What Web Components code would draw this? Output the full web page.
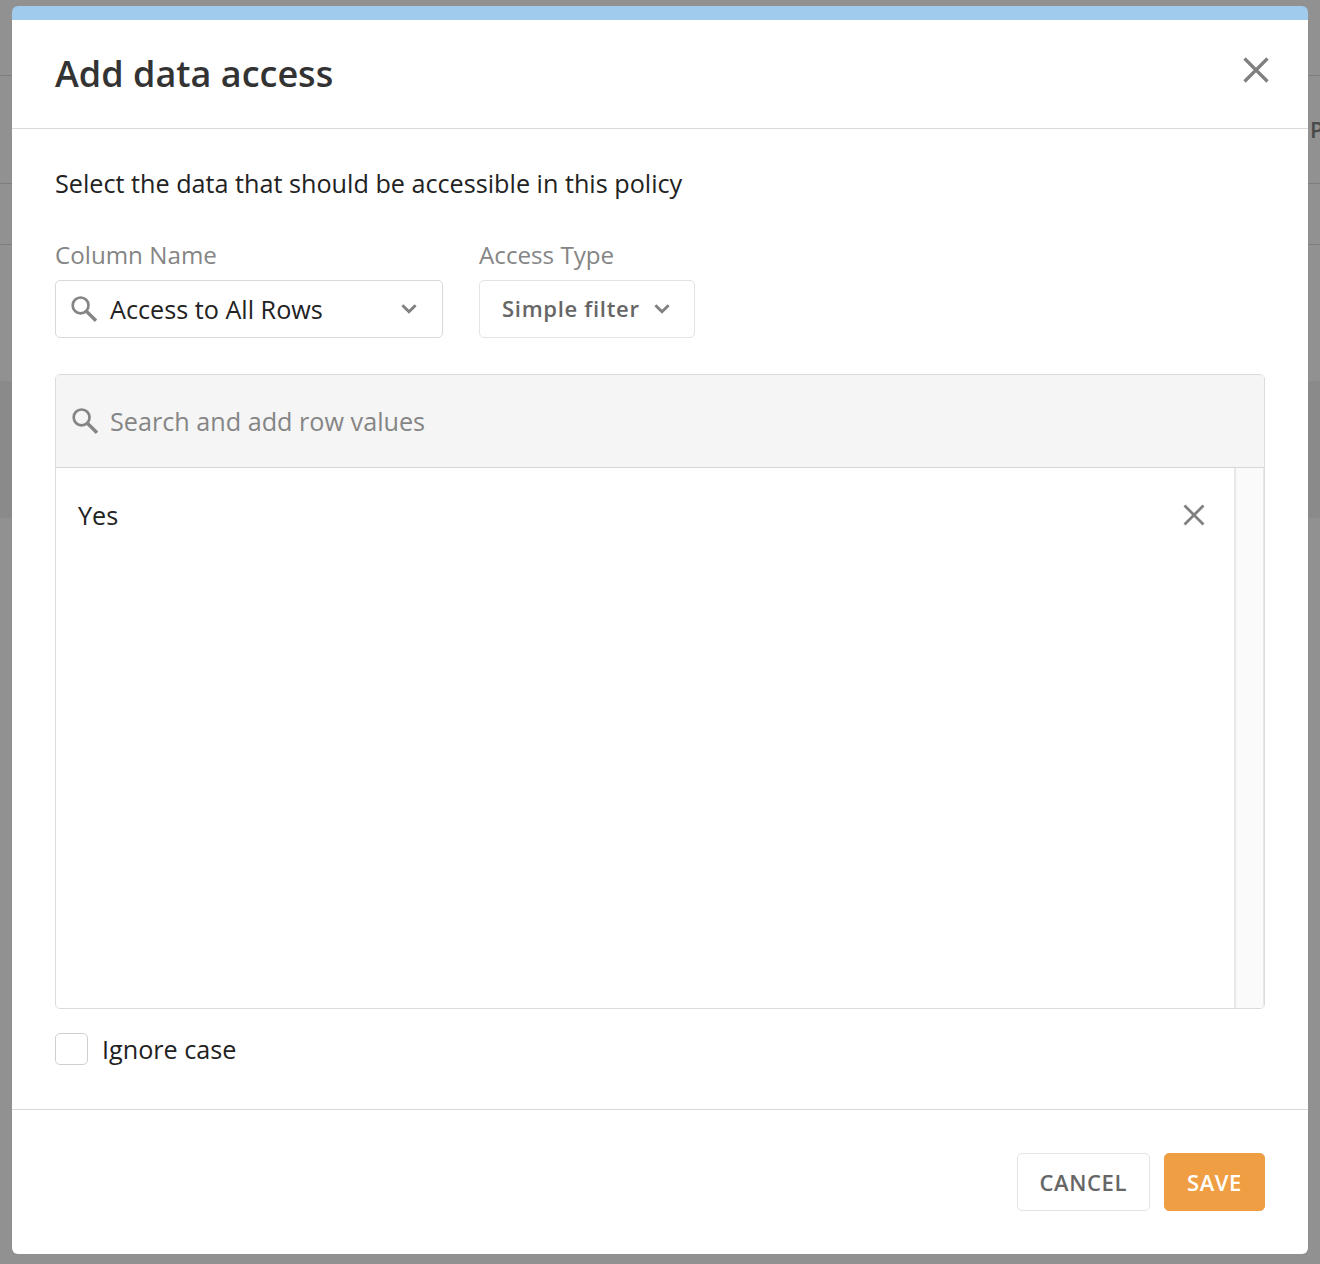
<!DOCTYPE html>
<html>
<head>
<meta charset="utf-8">
<title>Add data access</title>
<style>
  html, body { margin: 0; height: 100%; overflow: hidden; background: #919191; }
  body { font-family: "Open Sans", "Liberation Sans", sans-serif; }
</style>
</head>
<body>
<back-page></back-page>
<data-modal heading="Add data access">
  <p class="lead" slot="lead">Select the data that should be accessible in this policy</p>
  <field-select slot="fields" label="Column Name" value="Access to All Rows" search></field-select>
  <field-select slot="fields" label="Access Type" value="Simple filter"></field-select>
  <value-panel slot="panel" placeholder="Search and add row values">
    <value-row>Yes</value-row>
  </value-panel>
  <check-box slot="check">Ignore case</check-box>
  <flat-button slot="actions">CANCEL</flat-button>
  <flat-button slot="actions" primary>SAVE</flat-button>
</data-modal>

<script>
const SEARCH_ICON = `<svg width="28" height="28" viewBox="0 0 28 28" fill="none" stroke="#858585"><circle cx="9.6" cy="10.4" r="7.9" stroke-width="2.7"/><path d="M15.4 16.2L25 25.8" stroke-width="3.4"/></svg>`;
const CHEVRON_ICON = `<svg width="16" height="10" viewBox="0 0 16 10" fill="none" stroke="#808080" stroke-width="2.8"><path d="M1.4 1.2L8 7.8L14.6 1.2"/></svg>`;

// gris derriere le modal
class BackPage extends HTMLElement {
  constructor() {
    super();
    this.attachShadow({ mode: "open" });
    this.shadowRoot.innerHTML = `
      <style>
        :host { display: block; height: 1264px; background: #919191; color: #4a4a4a; overflow: hidden; }
        .r { border-bottom: 1px solid #7d7d7d; box-sizing: border-box; }
        .r1 { height: 76px; }
        .r2 { height: 108px; padding-bottom: 2px; display: flex; justify-content: flex-end; align-items: center; font-size: 22px; font-weight: 600; }
        .r2 span { width: 10px; overflow: hidden; }
        .r3 { height: 61px; }
        .gap { height: 136px; }
        .band { height: 137px; background: #8a8a8a; }
      </style>
      <div class="r r1"></div>
      <div class="r r2"><span>P</span></div>
      <div class="r r3"></div>
      <div class="gap"></div>
      <div class="band"></div>`;
  }
}

class DataModal extends HTMLElement {
  constructor() {
    super();
    this.attachShadow({ mode: "open" });
    this.shadowRoot.innerHTML = `
      <style>
        :host {
          position: absolute; left: 12px; top: 6px; width: 1296px; height: 1248px;
          display: flex; flex-direction: column; box-sizing: border-box;
          background: #fff; border-radius: 6px; overflow: hidden;
          border-top: 14px solid #a0cbec;
        }
        header {
          height: 108px; box-sizing: content-box; border-bottom: 1px solid #d9d9d9;
          display: flex; align-items: flex-start; justify-content: space-between;
          padding: 0 39px 0 43px;
        }
        h1 { margin: 30px 0 0; font-size: 36px; line-height: 48px; font-weight: 600; color: #333; }
        .close { margin-top: 37px; width: 26px; height: 26px; }
        main { flex: 1; padding: 0 43px; display: flex; flex-direction: column; min-height: 0; }
        ::slotted(.lead) { margin: 36px 0 0; font-size: 25.2px; line-height: 36px; color: #222; }
        .fields { display: flex; gap: 36px; margin-top: 38px; }
        .panel { margin-top: 36px; }
        .check { margin-top: 23px; }
        footer {
          height: 145px; box-sizing: border-box; border-top: 1px solid #d9d9d9;
          display: flex; justify-content: flex-end; align-items: flex-start; gap: 14px;
          padding: 43px 43px 0 0;
        }
      </style>
      <header>
        <h1></h1>
        <svg class="close" viewBox="0 0 26 26" fill="none" stroke="#7f7f7f" stroke-width="3.2"><path d="M1.5 1.5L24.5 24.5M24.5 1.5L1.5 24.5"/></svg>
      </header>
      <main>
        <slot name="lead"></slot>
        <div class="fields"><slot name="fields"></slot></div>
        <div class="panel"><slot name="panel"></slot></div>
        <div class="check"><slot name="check"></slot></div>
      </main>
      <footer><slot name="actions"></slot></footer>`;
    this.shadowRoot.querySelector("h1").textContent = this.getAttribute("heading");
  }
}

class FieldSelect extends HTMLElement {
  constructor() {
    super();
    this.attachShadow({ mode: "open" });
    const search = this.hasAttribute("search");
    this.shadowRoot.innerHTML = `
      <style>
        :host { display: block; }
        label { display: block; font-size: 24.2px; line-height: 31px; font-weight: 500; color: #858585; margin-bottom: 10px; }
        .box {
          height: 58px; box-sizing: border-box; border: 1px solid #d9d9d9; border-radius: 5px;
          display: flex; align-items: center; background: #fff;
        }
        .search { width: 388px; padding: 0 25px 0 15px; }
        .plain { width: 216px; padding: 0 24px 0 22px; border-color: #e3e3e3; }
        .search svg:first-child { margin-right: 11px; flex: none; }
        .value { flex: 1; font-size: 25.2px; color: #222; white-space: nowrap; }
        .plain .value { font-size: 22px; font-weight: 600; color: #666; letter-spacing: 0.7px; padding-bottom: 2px; }
      </style>
      <label></label>
      <div class="box ${search ? "search" : "plain"}">
        ${search ? SEARCH_ICON : ""}
        <span class="value"></span>
        ${CHEVRON_ICON}
      </div>`;
    this.shadowRoot.querySelector("label").textContent = this.getAttribute("label");
    this.shadowRoot.querySelector(".value").textContent = this.getAttribute("value");
  }
}

class ValuePanel extends HTMLElement {
  constructor() {
    super();
    this.attachShadow({ mode: "open" });
    this.shadowRoot.innerHTML = `
      <style>
        :host {
          display: block; width: 1210px; height: 635px; box-sizing: border-box;
          border: 1px solid #dcdcdc; border-radius: 5px; overflow: hidden;
        }
        .search {
          height: 93px; box-sizing: border-box; background: #f5f5f5; border-bottom: 1px solid #d6d6d6;
          display: flex; align-items: center; padding-left: 16px; gap: 10px;
          font-size: 25.2px; color: #858585;
        }
        .body { display: flex; height: 540px; }
        .list { flex: 1; }
        .track { width: 30px; box-sizing: border-box; background: #fafafa; border-left: 2px solid #e8e8e8; border-right: 1px solid #e8e8e8; }
      </style>
      <div class="search">${SEARCH_ICON}<span></span></div>
      <div class="body">
        <div class="list"><slot></slot></div>
        <div class="track"></div>
      </div>`;
    this.shadowRoot.querySelector(".search span").textContent = this.getAttribute("placeholder");
  }
}

class ValueRow extends HTMLElement {
  constructor() {
    super();
    this.attachShadow({ mode: "open" });
    this.shadowRoot.innerHTML = `
      <style>
        :host {
          display: flex; align-items: center; justify-content: space-between; height: 94px;
          padding: 0 29px 0 22px; box-sizing: border-box; font-size: 25.2px; color: #222;
        }
        svg { width: 22px; height: 22px; }
      </style>
      <slot></slot>
      <svg viewBox="0 0 22 22" fill="none" stroke="#808080" stroke-width="2.8"><path d="M1.5 1.5L20.5 20.5M20.5 1.5L1.5 20.5"/></svg>`;
  }
}

class CheckBox extends HTMLElement {
  constructor() {
    super();
    this.attachShadow({ mode: "open" });
    this.shadowRoot.innerHTML = `
      <style>
        :host { display: flex; align-items: center; gap: 14px; font-size: 25.2px; color: #222; }
        .mark { width: 33px; height: 32px; box-sizing: border-box; border: 1px solid #cfcfcf; border-radius: 5px; background: #fff; }
      </style>
      <span class="mark"></span><slot></slot>`;
  }
}

class FlatButton extends HTMLElement {
  constructor() {
    super();
    this.attachShadow({ mode: "open" });
    this.shadowRoot.innerHTML = `
      <style>
        :host {
          display: flex; align-items: center; height: 58px; box-sizing: border-box; padding: 0 22px 0 21px;
          border: 1px solid #e3e3e3; border-radius: 5px; background: #fff;
          font-size: 22px; font-weight: 600; letter-spacing: 0.6px; color: #666;
        }
        :host([primary]) { padding: 0 22px; background: #f09e43; border-color: #f09e43; color: #fff; }
      </style>
      <slot></slot>`;
  }
}

customElements.define("back-page", BackPage);
customElements.define("data-modal", DataModal);
customElements.define("field-select", FieldSelect);
customElements.define("value-panel", ValuePanel);
customElements.define("value-row", ValueRow);
customElements.define("check-box", CheckBox);
customElements.define("flat-button", FlatButton);
</script>
</body>
</html>
